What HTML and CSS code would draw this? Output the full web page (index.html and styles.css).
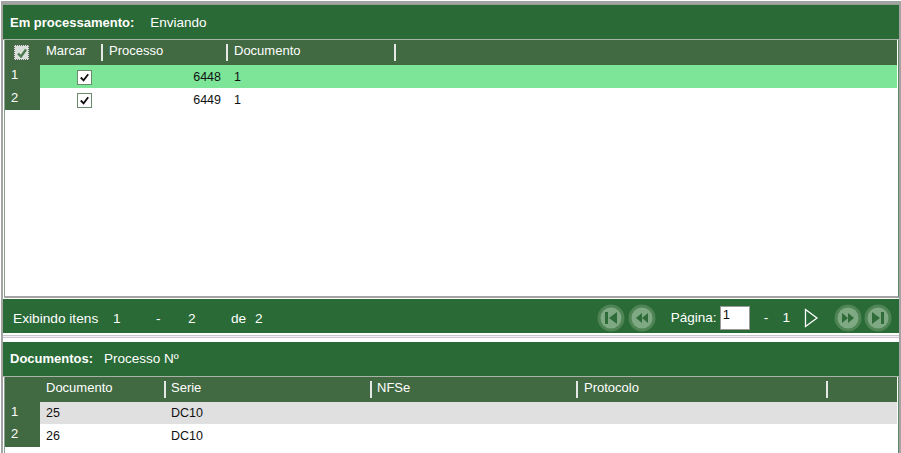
FILE: index.html
```html
<!DOCTYPE html>
<html lang="pt">
<head>
<meta charset="utf-8">
<title>Em processamento</title>
<link rel="stylesheet" href="styles.css">
</head>
<body>
<div class="frame">
  <section class="panel panel-top">
    <div class="title"><b>Em processamento:</b><span class="title-value">Enviando</span></div>
    <div class="grid grid-top">
      <div class="head">
        <div class="corner"><span class="head-check"><svg viewBox="0 0 14 14" width="14" height="14"><path d="M3 7.5 6 10.5 11 3.5" fill="none" stroke="#4c7a50" stroke-width="2.4"/></svg></span></div>
        <div class="hc c-marcar">Marcar</div>
        <div class="hc sep c-proc">Processo</div>
        <div class="hc sep c-doc">Documento</div>
        <div class="hc sep c-fill"></div>
      </div>
      <div class="row selected">
        <div class="num">1</div>
        <div class="cell c-marcar center"><span class="check"><svg viewBox="0 0 14 14" width="13" height="13"><path d="M3 7 6 10 11 3.5" fill="none" stroke="#111" stroke-width="2"/></svg></span></div>
        <div class="cell c-proc right">6448</div>
        <div class="cell c-doc">1</div>
      </div>
      <div class="row">
        <div class="num">2</div>
        <div class="cell c-marcar center"><span class="check"><svg viewBox="0 0 14 14" width="13" height="13"><path d="M3 7 6 10 11 3.5" fill="none" stroke="#111" stroke-width="2"/></svg></span></div>
        <div class="cell c-proc right">6449</div>
        <div class="cell c-doc">1</div>
      </div>
    </div>
    <div class="pager">
      <span class="p-label">Exibindo itens</span>
      <span class="p-a">1</span>
      <span class="p-b">-</span>
      <span class="p-c">2</span>
      <span class="p-d">de</span>
      <span class="p-e">2</span>
      <div class="p-nav">
        <svg class="nav-btn" viewBox="0 0 28 28" width="28" height="28"><circle cx="14" cy="14" r="13.5" fill="#4f8455"/><circle cx="14" cy="14" r="10.5" fill="#7fa983"/><path d="M8 8h3v12H8zM20 8v12l-8-6z" fill="#2f6c3a"/></svg>
        <svg class="nav-btn" viewBox="0 0 28 28" width="28" height="28"><circle cx="14" cy="14" r="13.5" fill="#4f8455"/><circle cx="14" cy="14" r="10.5" fill="#7fa983"/><path d="M14 9v10l-6-5zM20 9v10l-6-5z" fill="#2f6c3a"/></svg>
        <span class="p-page">Página:</span>
        <span class="page-input">1</span>
        <span class="p-dash">-</span>
        <span class="p-total">1</span>
        <svg class="next" viewBox="0 0 16 20" width="16" height="20"><path d="M2.5 1.5 14 10 2.5 18.5z" fill="none" stroke="#fff" stroke-width="1.3"/></svg>
        <svg class="nav-btn ff" viewBox="0 0 28 28" width="28" height="28"><circle cx="14" cy="14" r="13.5" fill="#4f8455"/><circle cx="14" cy="14" r="10.5" fill="#7fa983"/><path d="M8 9l6 5-6 5zM14 9l6 5-6 5z" fill="#2f6c3a"/></svg>
        <svg class="nav-btn last" viewBox="0 0 28 28" width="28" height="28"><circle cx="14" cy="14" r="13.5" fill="#4f8455"/><circle cx="14" cy="14" r="10.5" fill="#7fa983"/><path d="M8 8l8 6-8 6zM17 8h3v12h-3z" fill="#2f6c3a"/></svg>
      </div>
    </div>
  </section>
  <div class="divider"><div class="band"></div></div>
  <section class="panel panel-bottom">
    <div class="title"><b>Documentos:</b><span class="title-value tv2">Processo Nº</span></div>
    <div class="grid grid-bottom">
      <div class="head">
        <div class="corner"></div>
        <div class="hc d-doc">Documento</div>
        <div class="hc sep d-serie">Serie</div>
        <div class="hc sep d-nfse">NFSe</div>
        <div class="hc sep d-prot">Protocolo</div>
        <div class="hc sep d-fill"></div>
      </div>
      <div class="row grey">
        <div class="num">1</div>
        <div class="cell d-doc">25</div>
        <div class="cell d-serie">DC10</div>
      </div>
      <div class="row">
        <div class="num">2</div>
        <div class="cell d-doc">26</div>
        <div class="cell d-serie">DC10</div>
      </div>
    </div>
  </section>
</div>
</body>
</html>
```
FILE: styles.css
```css
* { box-sizing: border-box; }
html, body { margin: 0; padding: 0; height: 453px; overflow: hidden; background: #fff; }
body { font-family: "Liberation Sans", Arial, sans-serif; font-size: 12.5px; color: #111; }
.frame {
  width: 901px; height: 453px; padding: 1px 0 0 1px;
  display: flex; flex-direction: column; overflow: hidden;
}
.panel {
  width: 900px; flex: none;
  border-left: 2px solid #a3a3a3; border-right: 2px solid #a3a3a3;
  display: flex; flex-direction: column; background: #fff;
}
.panel-top { height: 332px; border-top: 3px solid #a3a3a3; }
.panel-bottom { height: 111px; }
.title {
  flex: none; background: #2a6a36; color: #fff;
  display: flex; align-items: center; font-size: 13px;
  border-bottom: 1px solid #a8b4a8;
}
.panel-top .title { height: 36px; padding: 1px 0 0 7px; border-top: 1px solid #8fa090; }
.panel-bottom .title { height: 35px; padding: 0 0 1px 7px; }
.title b { font-weight: bold; }
.title-value { margin-left: 16px; font-size: 13.5px; }
.title-value.tv2 { margin-left: 11px; }
.grid {
  flex: 1; min-height: 0; margin-left: 1px; padding-right: 1px;
  border-left: 1px solid #8aa08e; border-right: 1px solid #5f8a66; background: #fff;
}
.grid-top { border-bottom: 2px solid #a3a3a3; }
.head {
  height: 25px; background: #426a42; color: #fff; display: flex; align-items: flex-start; font-size: 13px;
}
.corner {
  width: 35px; flex: none; height: 25px;
  display: flex; align-items: center; justify-content: center; padding: 0 3px 0 0;
}
.head-check {
  width: 15px; height: 15px; background: #d9e0d9; border: 1px dotted #6a6a6a; display: block;
}
.head-check svg { display: block; }
.hc { height: 20px; margin-top: 3px; line-height: 15px; padding-left: 6px; flex: none; }
.hc.sep {
  border-left: 2px solid #e4e8e4; height: 17px; margin-top: 4px;
  padding-left: 5px; line-height: 14px;
}
.grid-top .hc.sep { padding-left: 6px; }
.hc.d-prot { padding-left: 6px; }
.c-marcar { width: 61px; }
.c-proc { width: 125px; }
.c-doc { width: 168px; }
.d-doc { width: 124px; }
.d-serie { width: 206px; }
.d-nfse { width: 206px; }
.d-prot { width: 250px; }
.row { height: 23px; display: flex; align-items: center; background: #fff; }
.row.selected { background: #7de598; }
.row.grey { background: #e0e0e0; }
.grid-top .row + .row { height: 22px; }
.grid-top .row + .row .cell { padding-top: 2px; }
.grid-bottom .row { height: 22px; }
.grid-bottom .row + .row { height: 23px; }
.num {
  width: 35px; height: 100%; flex: none; background: #426a42; color: #fff;
  padding: 2px 0 0 6px; line-height: 15px; font-size: 13px;
}
.cell { flex: none; padding-left: 6px; line-height: 15px; padding-top: 1px; }
.grid-top .cell.c-doc { padding-left: 8px; }
.d-serie { padding-left: 7px; }
.center, .grid-top .row + .row .center { display: flex; justify-content: center; padding: 2px 0 0 28px; }
.cell.right { text-align: right; padding-right: 5px; }
.check {
  width: 15px; height: 15px; background: #fff; border: 1px solid #6b8a6b; display: block;
}
.check svg { display: block; }
.pager {
  height: 34px; flex: none; margin-top: 1px; background: #2a6a36; color: #fff;
  display: flex; align-items: center; padding: 3px 7px 0 10px; font-size: 13.7px;
}
.pager > span { padding-top: 2px; }
.p-label { width: 100px; }
.p-a { width: 43px; }
.p-b { width: 32px; }
.p-c { width: 43px; }
.p-d { width: 24px; }
.p-e { width: 20px; }
.p-nav { margin-left: auto; display: flex; align-items: center; }
.nav-btn { display: block; margin-left: 3px; }
.p-page { margin-left: 15px; width: 49px; font-size: 13.5px; white-space: nowrap; }
.page-input {
  width: 30px; height: 24px; background: #fff; border: 1px solid #999; color: #111;
  padding-left: 2px; line-height: 16px; font-size: 13px;
}
.p-dash { margin-left: 14px; }
.p-total { margin-left: 14px; }
.next { margin-left: 13px; display: block; }
.nav-btn.ff { margin-left: 15px; }
.nav-btn.last { margin-left: 2px; }
.divider {
  height: 9px; width: 900px; flex: none; background: #fff; padding-top: 2px;
  border-left: 2px solid #a3a3a3; border-right: 2px solid #a3a3a3;
}
.band { height: 3px; border-top: 1px solid #c8c8c8; border-bottom: 1px solid #cfc8d4; background: #f1eff3; }
```
